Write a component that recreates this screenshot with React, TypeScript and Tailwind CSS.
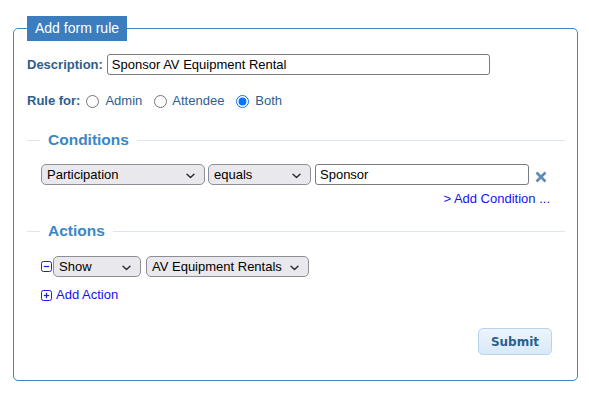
import React from "react";

const font = { fontFamily: '"Liberation Sans", Arial, sans-serif' };

function Chevron() {
  return (
    <svg className="absolute right-[9px] top-[8px]" width="9" height="6" viewBox="0 0 9 6">
      <path d="M1 1.2 L4.5 4.6 L8 1.2" fill="none" stroke="#2b2b2b" strokeWidth="1.4" strokeLinecap="round" strokeLinejoin="round" />
    </svg>
  );
}

function Select({ value, width }: { value: string; width: string }) {
  return (
    <div
      role="combobox"
      className={`relative ${width} flex h-[21px] items-center rounded-[5px] border border-[#8d8d95] bg-[#e9e9ed] pl-[5px] text-[13px] leading-[19px] text-black`}
    >
      <span className="-mt-[1px]">{value}</span>
      <Chevron />
    </div>
  );
}

function SectionHeading({ title }: { title: string }) {
  return (
    <div className="flex h-[20px] items-center">
      <div className="h-px w-[13px] bg-[#dbe6ed]" />
      <div className="px-[8px] text-[15.5px] font-bold leading-[20px] text-[#3a87c6]">{title}</div>
      <div className="h-px flex-1 bg-[#dbe6ed]" />
    </div>
  );
}

function BoxIcon({ plus }: { plus?: boolean }) {
  return (
    <svg width="11" height="11" viewBox="0 0 11 11" className="shrink-0">
      <rect x="0.5" y="0.5" width="10" height="10" rx="2" fill="white" stroke="#1c1ce6" strokeWidth="1" />
      <path d="M2.8 5.5 H8.2" stroke="#1c1ce6" strokeWidth="1.2" />
      {plus && <path d="M5.5 2.8 V8.2" stroke="#1c1ce6" strokeWidth="1.2" />}
    </svg>
  );
}

export default function App() {
  return (
    <div className="min-h-[399px] w-[589px] bg-white pl-[13px] pt-[16px]" style={font}>
      <fieldset className="m-0 w-[565px] rounded-[5px] border border-[#3f86c4] pb-[25px] pl-[13px] pr-[12px] pt-0">
        <legend className="h-[25px] bg-[#3b7dbd] px-[8px] text-[14px] leading-[25px] text-white">Add form rule</legend>

        <div className="mt-[13px] flex h-[21px] items-center">
          <span className="text-[13px] font-bold text-[#2c5e90]">Description:</span>
          <input
            defaultValue="Sponsor AV Equipment Rental"
            className="ml-[4px] h-[21px] w-[383px] rounded-[3px] border border-[#7b7b7f] bg-white pl-[4px] text-[13px] text-black outline-none"
            style={font}
          />
        </div>

        <div className="mt-[18px] flex h-[16px] items-center text-[13px] text-[#2c5e90]">
          <span className="font-bold">Rule for:</span>
          <input type="radio" name="rf" className="m-0 ml-[6px] h-[13px] w-[13px]" />
          <span className="ml-[6px]">Admin</span>
          <input type="radio" name="rf" className="m-0 ml-[12px] h-[13px] w-[13px]" />
          <span className="ml-[5px]">Attendee</span>
          <input type="radio" name="rf" defaultChecked className="m-0 ml-[12px] h-[13px] w-[13px]" />
          <span className="ml-[6px]">Both</span>
        </div>

        <div className="mt-[21px]">
          <SectionHeading title="Conditions" />
        </div>

        <div className="mt-[14px] flex h-[21px] items-center pl-[14px]">
          <Select value="Participation" width="w-[164px]" />
          <div className="ml-[3px]">
            <Select value="equals" width="w-[103px]" />
          </div>
          <input
            defaultValue="Sponsor"
            className="ml-[4px] h-[21px] w-[214px] rounded-[3px] border border-[#7b7b7f] bg-white pl-[4px] text-[13px] text-black outline-none"
            style={font}
          />
          <svg width="12" height="12" viewBox="0 0 12 12" className="ml-[6px] mt-[5px]">
            <path d="M1.5 1.5 L10.5 10.5 M10.5 1.5 L1.5 10.5" stroke="#5b8cb4" strokeWidth="2.6" strokeLinecap="butt" />
          </svg>
        </div>

        <div className="mt-[6px] flex h-[16px] items-center justify-end pr-[15px]">
          <span className="text-[13px] text-[#1414ea]">&gt; Add Condition ...</span>
        </div>

        <div className="mt-[14px]">
          <SectionHeading title="Actions" />
        </div>

        <div className="mt-[15px] flex h-[21px] items-center pl-[14px]">
          <BoxIcon />
          <div className="ml-[1px]">
            <Select value="Show" width="w-[88px]" />
          </div>
          <div className="ml-[5px]">
            <Select value="AV Equipment Rentals" width="w-[163px]" />
          </div>
        </div>

        <div className="mt-[10px] flex h-[16px] items-center pl-[14px]">
          <BoxIcon plus />
          <span className="ml-[4px] text-[13px] text-[#1414ea]">Add Action</span>
        </div>

        <div className="mt-[25px] flex justify-end pr-[13px]">
          <button
            className="h-[27px] w-[74px] rounded-[5px] border border-[#b7d4ee] bg-gradient-to-b from-[#edf5fc] to-[#d8e9f8] text-[12px] font-bold text-[#2b5f8e]"
            style={{ fontFamily: '"DejaVu Sans", Verdana, sans-serif' }}
          >
            Submit
          </button>
        </div>
      </fieldset>
    </div>
  );
}
